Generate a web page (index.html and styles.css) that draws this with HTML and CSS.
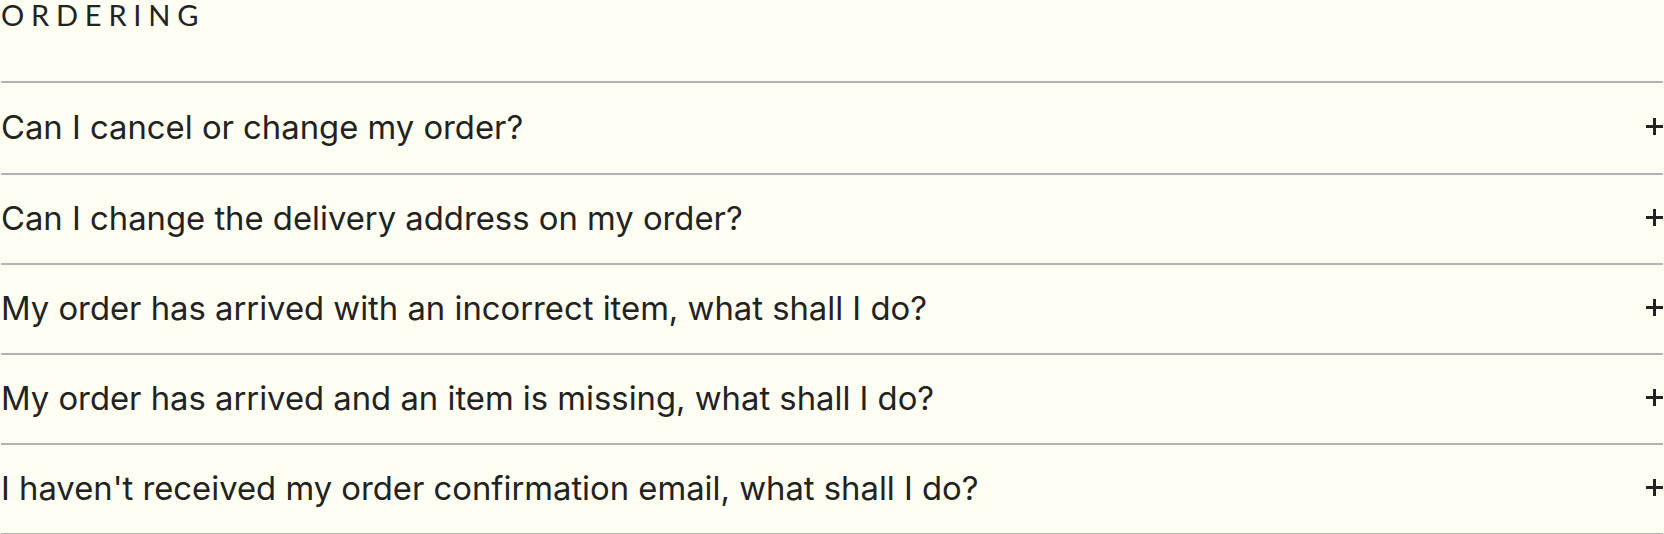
FILE: index.html
```html
<!DOCTYPE html>
<html lang="en">
<head>
<meta charset="utf-8">
<title>Ordering FAQ</title>
<link rel="stylesheet" href="styles.css">
</head>
<body>
<section class="faq">
  <h2 class="faq-title">ORDERING</h2>
  <ul class="faq-list">
    <li class="faq-item"><span class="faq-q">Can I cancel or change my order?</span><span class="faq-icon"></span></li>
    <li class="faq-item"><span class="faq-q">Can I change the delivery address on my order?</span><span class="faq-icon"></span></li>
    <li class="faq-item"><span class="faq-q">My order has arrived with an incorrect item, what shall I do?</span><span class="faq-icon"></span></li>
    <li class="faq-item"><span class="faq-q">My order has arrived and an item is missing, what shall I do?</span><span class="faq-icon"></span></li>
    <li class="faq-item"><span class="faq-q">I haven't received my order confirmation email, what shall I do?</span><span class="faq-icon"></span></li>
  </ul>
</section>
</body>
</html>
```
FILE: styles.css
```css
html, body {
  margin: 0;
  padding: 0;
  background: #fffef2;
}
body {
  font-family: Inter, "Liberation Sans", sans-serif;
  color: #222222;
}
.faq {
  padding: 0 1px 0 1px;
}
.faq-title {
  margin: 0;
  height: 81px;
  font-family: Lato, Inter, sans-serif;
  font-weight: 400;
  font-size: 29px;
  line-height: 30px;
  letter-spacing: 6.8px;
  color: #222222;
}
.faq-list {
  list-style: none;
  margin: 0;
  padding: 0;
  border-top: 2px solid #b3b3b3;
}
.faq-item {
  display: flex;
  align-items: center;
  justify-content: space-between;
  box-sizing: border-box;
  height: 90px;
  padding-bottom: 3px;
  border-bottom: 2px solid #b3b3b3;
}
.faq-item:first-child {
  height: 92px;
}
.faq-q {
  font-size: 32.8px;
  line-height: 40px;
  letter-spacing: 0;
}
.faq-icon {
  position: relative;
  flex: none;
  width: 17px;
  height: 17px;
}
.faq-icon::before,
.faq-icon::after {
  content: "";
  position: absolute;
  background: #222222;
}
.faq-icon::before {
  left: 0;
  right: 0;
  top: 7px;
  height: 3px;
}
.faq-icon::after {
  top: 0;
  bottom: 0;
  left: 7px;
  width: 3px;
}
```
